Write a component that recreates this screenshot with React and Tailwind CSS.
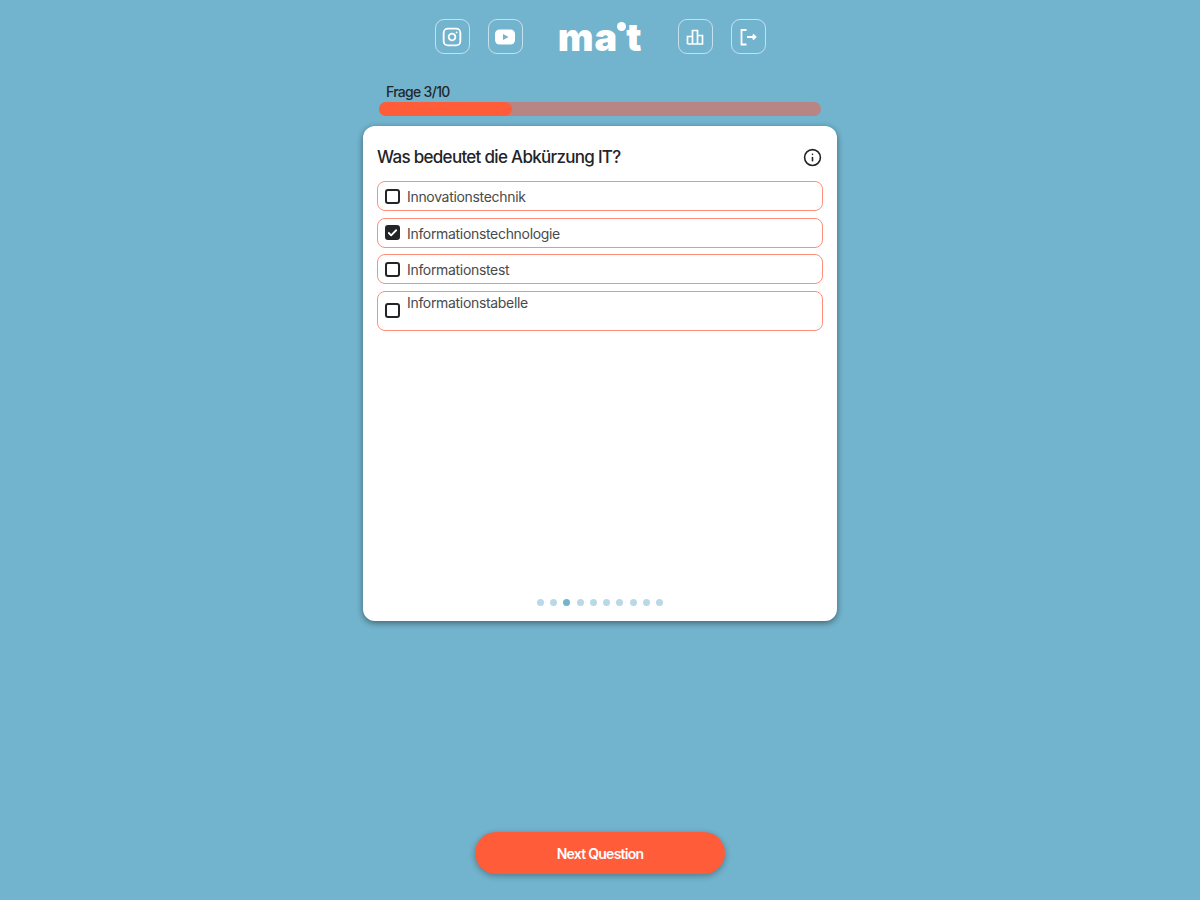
import React from "react";
import { Instagram, Info, Check } from "lucide-react";

const options = [
  { label: "Innovationstechnik" },
  { label: "Informationstechnologie", checked: true },
  { label: "Informationstest" },
  { label: "Informationstabelle", tall: true },
];

const dots = [0, 1, 2, 3, 4, 5, 6, 7, 8, 9];

const IconBox = ({ children }) => (
  <a className="w-[35px] h-[35px] flex items-center justify-center rounded-[9px] border-[1.5px] border-white/60 text-white">
    {children}
  </a>
);

const YoutubeIcon = () => (
  <svg width="22" height="22" viewBox="0 0 22 22">
    <rect x="1" y="3.5" width="20" height="15" rx="4.5" fill="#fff" />
    <path d="M9 8l5.5 3L9 14z" fill="#72b3cd" />
  </svg>
);

const BarsIcon = () => (
  <svg width="18" height="18" viewBox="0 0 18 18" fill="none" stroke="#fff" strokeWidth="1.7">
    <path d="M1.5 16V8.5h5V16M6.5 16V2.5h5V16M11.5 16V7.5h5V16zM1.5 16h15" />
  </svg>
);

const ExitIcon = () => (
  <svg width="20" height="20" viewBox="0 0 20 20" fill="none" stroke="#fff" strokeWidth="1.8">
    <path d="M8.5 3H3.5v14.5h5M9 10h8.5M14.8 7.5l2.7 2.5-2.7 2.5" />
  </svg>
);

const Logo = () => (
  <div className="relative w-[85px] h-[34px] flex items-end justify-center text-white font-['Inter',sans-serif] font-black text-[38px] leading-[34px] tracking-[1px]">
    <span>ma</span>
    <span className="w-[9px] h-[9px] rounded-full bg-white self-start mt-[2px] -ml-[1px] shrink-0" />
    <span>t</span>
  </div>
);

const Option = ({ label, checked, tall }) => (
  <div
    className={`flex gap-[7px] px-[7px] rounded-lg border-[1.5px] border-[#ff8f7a] ${
      tall ? "h-[40px] items-start" : "h-[30px] items-center"
    }`}
  >
    <span
      className={`w-[15px] h-[15px] shrink-0 rounded-[3px] border-2 border-[#222428] flex items-center justify-center ${
        checked ? "bg-[#222428]" : "bg-white"
      } ${tall ? "mt-[11px]" : ""}`}
    >
      {checked && <Check size={12} strokeWidth={4} color="#fff" />}
    </span>
    <span className={`text-[14px] leading-[20px] tracking-[-0.32px] text-[#4a4a4a] ${tall ? "mt-[1px]" : "mt-[2px]"}`}>
      {label}
    </span>
  </div>
);

export default function App() {
  return (
    <div className="h-screen bg-[#72b3cd] flex flex-col items-center font-['Inter',sans-serif] pt-[19px] pb-[26px]">
      <header className="flex items-center w-[331px] justify-between">
        <div className="flex gap-[18px]">
          <IconBox>
            <Instagram size={20} strokeWidth={2.2} />
          </IconBox>
          <IconBox>
            <YoutubeIcon />
          </IconBox>
        </div>
        <Logo />
        <div className="flex gap-[18px]">
          <IconBox>
            <BarsIcon />
          </IconBox>
          <IconBox>
            <ExitIcon />
          </IconBox>
        </div>
      </header>

      <div className="w-[442px] mt-[28px]">
        <div className="pl-[7px] text-[14px] leading-[20px] font-medium tracking-[-0.7px] text-[#22282c]">Frage 3/10</div>
        <div className="h-[14px] rounded-full bg-[#b78684]">
          <div className="h-full w-[30%] rounded-full bg-[#ff5c39]" />
        </div>
      </div>

      <main className="w-[474px] h-[495px] mt-[10px] bg-white rounded-xl shadow-[0_2px_6px_rgba(0,0,0,0.45)] flex flex-col px-[14px] pt-[19px] pb-[15px]">
        <div className="flex items-center justify-between h-[24px] mr-[1px]">
          <h1 className="text-[17px] leading-[24px] font-medium tracking-[-0.7px] text-[#222428]">Was bedeutet die Abkürzung IT?</h1>
          <Info size={19} strokeWidth={2} color="#222428" />
        </div>
        <div className="flex flex-col gap-[6.7px] mt-[12px]">
          {options.map((o) => (
            <Option key={o.label} {...o} />
          ))}
        </div>
        <div className="mt-auto flex justify-center gap-[6.33px]">
          {dots.map((d) => (
            <span
              key={d}
              className={`w-[7px] h-[7px] rounded-full ${d === 2 ? "bg-[#72b3cd]" : "bg-[#b9d9e6]"}`}
            />
          ))}
        </div>
      </main>

      <button className="mt-auto w-[250px] h-[42px] rounded-full bg-[#ff5c39] text-white text-[14px] font-semibold tracking-[-0.75px] shadow-[0_2px_6px_rgba(0,0,0,0.3)]">
        Next Question
      </button>
    </div>
  );
}
